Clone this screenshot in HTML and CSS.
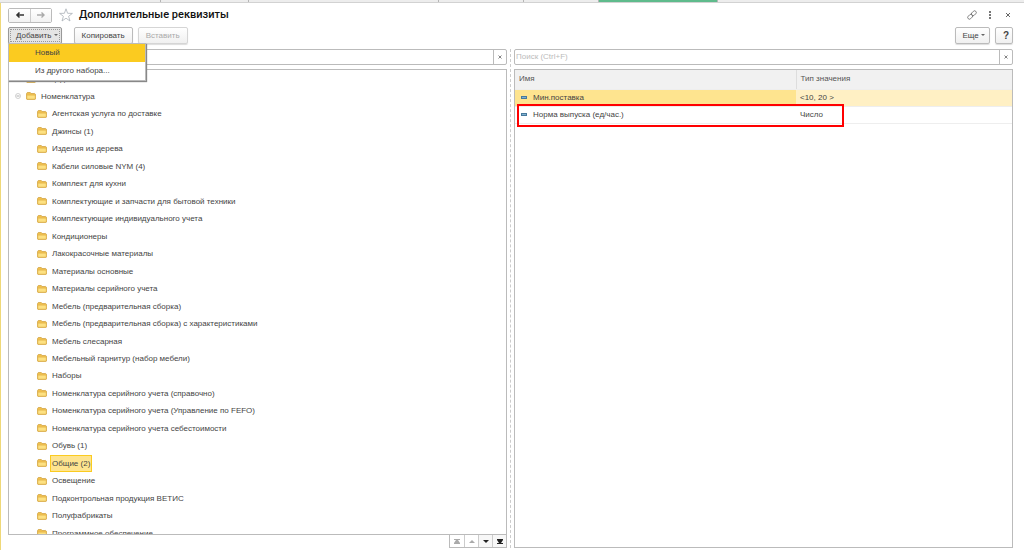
FILE: index.html
```html
<!DOCTYPE html>
<html lang="ru">
<head>
  <meta charset="UTF-8">
  <title>Дополнительные реквизиты</title>
  <link rel="stylesheet" href="styles.css">
</head>
<body>
  <svg class="sprite" aria-hidden="true">
    <symbol id="folder" viewBox="0 0 10 8">
      <path d="M.5 7V1.600L1.300.5h3l.8 1h3.600l.8.8V7l-.6.6H1.100z" fill="#f0c04e" stroke="#cf9f3c" stroke-width=".7"/>
      <path d="M.9 3.200h8.300v3.900H.9z" fill="#fde182" stroke="#dcae48" stroke-width=".5"/>
    </symbol>
  </svg>

  <div class="tabs">
    <span class="tab"></span>
    <span class="tab"></span>
    <span class="tab"></span>
    <span class="tab"></span>
    <span class="tab"></span>
    <span class="tab active"></span>
  </div>

  <div class="window">
    <header class="title-bar">
      <div class="history">
        <button type="button" aria-label="Назад"><svg width="10" height="8" viewBox="0 0 10 8"><path d="M9 4H2M4.500 1.500L2 4l2.500 2.500" fill="none" stroke="#333" stroke-width="1.600"/></svg></button>
        <button type="button" aria-label="Вперед"><svg width="10" height="8" viewBox="0 0 10 8"><path d="M1 4H8M5.500 1.500L8 4 5.500 6.500" fill="none" stroke="#aaa" stroke-width="1.400"/></svg></button>
      </div>
      <svg class="star" width="14" height="14" viewBox="0 0 14 14"><path d="M7 .8l1.600 4.500 4.800.1-3.800 2.900 1.400 4.700L7 10.200 3 13l1.400-4.700L.6 5.400l4.800-.1z" fill="#fff" stroke="#a9b0b8" stroke-width=".8"/></svg>
      <h1>Дополнительные реквизиты</h1>
      <div class="window-tools">
        <button type="button" aria-label="Ссылка"><svg width="10" height="10" viewBox="0 0 10 10"><g fill="none" stroke="#777" stroke-width=".9"><rect x="4" y="1.600" width="5.600" height="3.400" rx="1.700" transform="rotate(-45 6.800 3.300)"/><rect x=".4" y="5" width="5.600" height="3.400" rx="1.700" transform="rotate(-45 3.200 6.700)"/></g></svg></button>
        <button type="button" aria-label="Меню"><svg width="10" height="10" viewBox="0 0 10 10"><path d="M4 1h2v2H4zM4 4h2v2H4zM4 7h2v2H4z" fill="#777"/></svg></button>
        <button type="button" aria-label="Закрыть"><svg width="10" height="10" viewBox="0 0 10 10"><path d="M3 3l4 4M7 3L3 7" stroke="#666" stroke-width="1"/></svg></button>
      </div>
    </header>

    <div class="toolbar">
      <div class="dropdown">
        <button type="button" class="btn pressed" aria-expanded="true">Добавить <span class="caret"></span></button>
        <div class="dropdown-content">
          <button type="button" class="selected">Новый</button>
          <button type="button">Из другого набора...</button>
        </div>
      </div>
      <button type="button" class="btn">Копировать</button>
      <button type="button" class="btn" disabled>Вставить</button>
      <button type="button" class="btn more">Еще <span class="caret"></span></button>
      <button type="button" class="btn help">?</button>
    </div>

    <main class="panes">
      <section class="pane">
        <div class="search">
          <input type="text" aria-label="Поиск по наборам">
          <button type="button" aria-label="Очистить"><svg width="4" height="4" viewBox="0 0 4 4"><path d="M.5.5l3 3M3.500.5l-3 3" stroke="#777" stroke-width=".9"/></svg></button>
        </div>
        <div class="tree-box">
          <ul class="tree">
            <li class="group"><svg class="folder"><use href="#folder"/></svg><span>Инциденты</span></li>
            <li class="group"><svg class="toggle" viewBox="0 0 6 6"><circle cx="3" cy="3" r="2.500" fill="#fff" stroke="#bbb" stroke-width=".7"/><path d="M1.500 3h3" stroke="#999" stroke-width=".8"/></svg><svg class="folder"><use href="#folder"/></svg><span>Номенклатура</span></li>
            <li><svg class="folder"><use href="#folder"/></svg><span>Агентская услуга по доставке</span></li>
            <li><svg class="folder"><use href="#folder"/></svg><span>Джинсы (1)</span></li>
            <li><svg class="folder"><use href="#folder"/></svg><span>Изделия из дерева</span></li>
            <li><svg class="folder"><use href="#folder"/></svg><span>Кабели силовые NYM (4)</span></li>
            <li><svg class="folder"><use href="#folder"/></svg><span>Комплект для кухни</span></li>
            <li><svg class="folder"><use href="#folder"/></svg><span>Комплектующие и запчасти для бытовой техники</span></li>
            <li><svg class="folder"><use href="#folder"/></svg><span>Комплектующие индивидуального учета</span></li>
            <li><svg class="folder"><use href="#folder"/></svg><span>Кондиционеры</span></li>
            <li><svg class="folder"><use href="#folder"/></svg><span>Лакокрасочные материалы</span></li>
            <li><svg class="folder"><use href="#folder"/></svg><span>Материалы основные</span></li>
            <li><svg class="folder"><use href="#folder"/></svg><span>Материалы серийного учета</span></li>
            <li><svg class="folder"><use href="#folder"/></svg><span>Мебель (предварительная сборка)</span></li>
            <li><svg class="folder"><use href="#folder"/></svg><span>Мебель (предварительная сборка) с характеристиками</span></li>
            <li><svg class="folder"><use href="#folder"/></svg><span>Мебель слесарная</span></li>
            <li><svg class="folder"><use href="#folder"/></svg><span>Мебельный гарнитур (набор мебели)</span></li>
            <li><svg class="folder"><use href="#folder"/></svg><span>Наборы</span></li>
            <li><svg class="folder"><use href="#folder"/></svg><span>Номенклатура серийного учета (справочно)</span></li>
            <li><svg class="folder"><use href="#folder"/></svg><span>Номенклатура серийного учета (Управление по FEFO)</span></li>
            <li><svg class="folder"><use href="#folder"/></svg><span>Номенклатура серийного учета себестоимости</span></li>
            <li><svg class="folder"><use href="#folder"/></svg><span>Обувь (1)</span></li>
            <li class="current"><svg class="folder"><use href="#folder"/></svg><span>Общие (2)</span></li>
            <li><svg class="folder"><use href="#folder"/></svg><span>Освещение</span></li>
            <li><svg class="folder"><use href="#folder"/></svg><span>Подконтрольная продукция ВЕТИС</span></li>
            <li><svg class="folder"><use href="#folder"/></svg><span>Полуфабрикаты</span></li>
            <li><svg class="folder"><use href="#folder"/></svg><span>Программное обеспечение</span></li>
          </ul>
        </div>
        <div class="pager">
          <button type="button" disabled aria-label="В начало"><svg width="6" height="5" viewBox="0 0 6 5"><path d="M0 0h6v1H4l2 3v1H0V4l2-3H0z"/></svg></button>
          <button type="button" disabled aria-label="Вверх"><svg width="6" height="5" viewBox="0 0 6 5"><path d="M3 1l3 3H0z"/></svg></button>
          <button type="button" aria-label="Вниз"><svg width="6" height="5" viewBox="0 0 6 5"><path d="M0 1h6L3 4z"/></svg></button>
          <button type="button" aria-label="В конец"><svg width="6" height="5" viewBox="0 0 6 5"><path d="M0 0h6v1L4 4h2v1H0V4h2L0 1z"/></svg></button>
        </div>
      </section>

      <div class="splitter"></div>

      <section class="pane">
        <div class="search">
          <input type="text" placeholder="Поиск (Ctrl+F)" aria-label="Поиск (Ctrl+F)">
          <button type="button" aria-label="Очистить"><svg width="4" height="4" viewBox="0 0 4 4"><path d="M.5.5l3 3M3.500.5l-3 3" stroke="#777" stroke-width=".9"/></svg></button>
        </div>
        <div class="table-box">
          <table>
            <thead>
              <tr>
                <th class="name">Имя</th>
                <th>Тип значения</th>
              </tr>
            </thead>
            <tbody>
              <tr class="selected">
                <td class="name"><span class="attr"></span>Мин.поставка</td>
                <td>&lt;10, 20 &gt;</td>
              </tr>
              <tr>
                <td class="name"><span class="attr"></span>Норма выпуска (ед/час.)</td>
                <td>Число</td>
              </tr>
            </tbody>
          </table>
          <div class="highlight"></div>
        </div>
      </section>
    </main>
  </div>
</body>
</html>
```
FILE: styles.css
```css
* {
  box-sizing: border-box;
}
body {
  margin: 0;
  height: 100vh;
  display: flex;
  flex-direction: column;
  overflow: hidden;
  background: #fff;
  color: #444;
  font-family: "Liberation Sans", Arial, sans-serif;
  font-size: 8px;
  line-height: 12px;
}
button,
input {
  font: inherit;
  color: inherit;
  margin: 0;
  padding: 0;
}
.sprite {
  display: none;
}

/* open windows strip */
.tabs {
  display: flex;
  height: 3px;
  background: #ededed;
  border-bottom: 1px solid #d2d2d2;
}
.tab {
  width: 88px;
  border-right: 1px solid #b5b5b5;
}
.tab:first-child {
  width: 161px;
}
.tab:nth-child(3) {
  width: 190px;
}
.tab:nth-child(4) {
  width: 85px;
}
.tab:nth-child(5) {
  width: 75px;
}
.tab.active {
  width: 119px;
  background: #5fbb8c;
}

.window {
  flex: 1;
  min-height: 0;
  display: flex;
  flex-direction: column;
  padding: 4px 11px 2px 7px;
  border-left: 1px solid #efd878;
}
.title-bar {
  display: flex;
  align-items: center;
  height: 16px;
}
.history {
  display: flex;
  height: 15px;
  border: 1px solid #bbb;
  border-radius: 2px;
}
.history button {
  display: flex;
  align-items: center;
  justify-content: center;
  width: 21px;
  border: none;
  background: linear-gradient(#fff, #f2f2f2);
}
.history button + button {
  border-left: 1px solid #ccc;
}
.star {
  margin: 0 6px 0 7px;
}
h1 {
  margin: 0;
  color: #111;
  font-family: Roboto, Arial, sans-serif;
  font-size: 11px;
  font-weight: 500;
  line-height: 16px;
}
.window-tools {
  display: flex;
  gap: 8px;
  margin-left: auto;
}
.window-tools button {
  display: flex;
  border: none;
  background: none;
}

.toolbar {
  display: flex;
  margin-top: 4px;
  height: 17px;
}
.btn {
  height: 17px;
  padding: 0 7px;
  border: 1px solid #bbb;
  border-radius: 2px;
  background: linear-gradient(#fff, #f0f0f0);
  box-shadow: 0 1px 1px #ddd;
}
.btn:disabled {
  color: #aaa;
  border-color: #d5d5d5;
}
.btn.pressed {
  padding-right: 3px;
  background: #e4e4e4;
  border-color: #999;
  outline: 1px dotted #999;
  outline-offset: -3px;
}
.btn + .btn {
  margin-left: 5px;
}
.toolbar .more {
  margin-left: auto;
  padding-right: 4px;
}
.help {
  width: 18px;
  font-size: 10px;
  font-weight: bold;
}
.caret {
  display: inline-block;
  vertical-align: middle;
  border: 2px solid transparent;
  border-top-color: #666;
  border-bottom: none;
}
.dropdown {
  position: relative;
  margin-right: 12px;
}
.dropdown-content {
  position: absolute;
  top: 16px;
  left: 0;
  z-index: 2;
  width: 138px;
  border: 1px solid #bbb;
  background: #fff;
  box-shadow: 1px 1px 1px #888;
}
.dropdown-content button {
  display: block;
  width: 100%;
  height: 18px;
  padding-left: 26px;
  border: none;
  background: #fff;
  text-align: left;
}
.dropdown-content .selected {
  background: #fbcb20;
}

.panes {
  flex: 1;
  min-height: 0;
  display: flex;
  margin-top: 5px;
}
.pane {
  flex: 1;
  min-width: 0;
  display: flex;
  flex-direction: column;
}
.splitter {
  width: 4px;
  margin-left: 3px;
  border-left: 1px dashed #ccc;
}
.search {
  display: flex;
  height: 16px;
  margin-bottom: 4px;
  border: 1px solid #bbb;
  border-radius: 2px;
}
.search input {
  flex: 1;
  min-width: 0;
  padding-left: 1px;
  border: none;
  outline: none;
  background: none;
}
.search input::placeholder {
  color: #bbb;
}
.search button {
  display: flex;
  align-items: center;
  justify-content: center;
  width: 13px;
  border: none;
  border-left: 1px solid #bbb;
  background: none;
}

.tree-box {
  flex: 1;
  min-height: 0;
  overflow: hidden;
  border: 1px solid #bbb;
}
.tree {
  display: flex;
  flex-direction: column;
  height: calc(100% + 8px);
  margin: 0;
  padding: 0;
  list-style: none;
}
.tree li {
  flex: 1;
  min-height: 0;
  display: flex;
  align-items: center;
  padding-left: 28px;
}
.tree .group {
  position: relative;
  padding-left: 17px;
}
.tree span {
  padding: 0 1px;
  border: 1px solid transparent;
  line-height: 15px;
}
.tree .current span {
  border-color: #fbcb20;
  background: #fee48f;
}
.folder {
  width: 10px;
  height: 8px;
  margin-right: 3px;
}
.toggle {
  position: absolute;
  left: 6px;
  width: 6px;
  height: 6px;
}
.pager {
  display: flex;
  align-self: flex-end;
  height: 13px;
  border: 1px solid #bbb;
  border-top: none;
}
.pager button {
  display: flex;
  align-items: center;
  justify-content: center;
  width: 14px;
  border: none;
  background: #f7f7f7;
  fill: #222;
}
.pager button + button {
  border-left: 1px solid #ccc;
}
.pager button:disabled {
  background: #fff;
  fill: #aaa;
}

.table-box {
  position: relative;
  flex: 1;
  border: 1px solid #bbb;
}
table {
  width: 100%;
  table-layout: fixed;
  border-collapse: collapse;
}
th,
td {
  height: 17px;
  padding: 0 4px;
  border-bottom: 1px solid #eee;
  text-align: left;
  font-weight: normal;
}
th {
  height: 19px;
  background: #f1f1f1;
  color: #555;
}
.name {
  width: 281px;
}
th.name {
  border-right: 1px solid #ddd;
}
.selected td {
  background: #fff0c4;
}
.selected td.name {
  background: #fee48f;
}
.attr {
  display: inline-block;
  width: 6px;
  height: 3px;
  margin: 0 6px 0 2px;
  vertical-align: middle;
  background: #7fb0d0;
  border: 1px solid #47799c;
}
/* red frame around the new attribute */
.highlight {
  position: absolute;
  top: 34px;
  left: 2px;
  width: 327px;
  height: 23px;
  border: 2px solid #ff0000;
}
```
